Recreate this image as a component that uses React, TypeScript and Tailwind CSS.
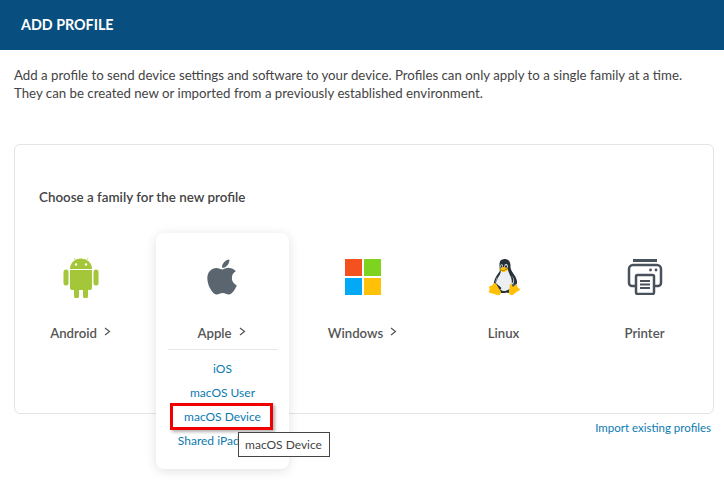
import { FaApple } from 'react-icons/fa';
import { FcLinux } from 'react-icons/fc';

function Chevron() {
  return (
    <svg width="7" height="9" viewBox="0 0 7 9" className="ml-[7px] mb-[4px]" fill="none">
      <path d="M1 1l4.5 3.5L1 8" stroke="#555" strokeWidth="1.2" />
    </svg>
  );
}

function AndroidIcon() {
  return (
    <svg width="36" height="42" viewBox="0 0 36 42" fill="#a4c639">
      <path d="M7 13a11 10.5 0 0 1 22 0z" />
      <path d="M11 2l2.500 4M25 2l-2.500 4" stroke="#a4c639" strokeWidth="0.6" />
      <circle cx="13" cy="8.500" r="1.200" fill="#fff" />
      <circle cx="23" cy="8.500" r="1.200" fill="#fff" />
      <path d="M7 14h22v18a2 2 0 0 1-2 2h-2v6a2 2 0 0 1-5 0v-6h-4v6a2 2 0 0 1-5 0v-6H9a2 2 0 0 1-2-2z" />
      <rect x="0.500" y="13.500" width="5" height="16" rx="2.500" />
      <rect x="30.500" y="13.500" width="5" height="16" rx="2.500" />
    </svg>
  );
}

function WindowsIcon() {
  return (
    <svg width="36" height="36" viewBox="0 0 36 36">
      <rect width="17" height="17" fill="#f4511e" />
      <rect x="19" width="17" height="17" fill="#7ed321" />
      <rect y="19" width="17" height="17" fill="#03a9f4" />
      <rect x="19" y="19" width="17" height="17" fill="#ffc107" />
    </svg>
  );
}

function PrinterIcon() {
  return (
    <svg width="36" height="36" viewBox="0 0 36 36" fill="none" stroke="#47525c">
      <path d="M6 1.500h24" strokeWidth="3" />
      <path d="M8 27H5a3 3 0 0 1-3-3V10a4 4 0 0 1 4-4h24a4 4 0 0 1 4 4v14a3 3 0 0 1-3 3h-3" strokeWidth="2.500" />
      <rect x="9" y="16" width="18" height="19" rx="1.500" strokeWidth="2.500" fill="#fff" />
      <path d="M13 22h10M13 25.500h10M13 29h10" strokeWidth="1.800" />
      <circle cx="23.500" cy="11" r="1.400" fill="#47525c" stroke="none" />
      <circle cx="29" cy="11" r="1.400" fill="#47525c" stroke="none" />
    </svg>
  );
}

const families = [
  { name: 'Android', icon: <AndroidIcon />, more: true },
  { name: 'Apple', icon: <FaApple size={40} color="#5a6570" />, more: true, open: true },
  { name: 'Windows', icon: <WindowsIcon />, more: true },
  { name: 'Linux', icon: <FcLinux size={48} /> },
  { name: 'Printer', icon: <PrinterIcon /> },
];

const appleItems = ['iOS', 'macOS User', 'macOS Device', 'Shared iPad User'];

export default function App() {
  return (
    <div className="h-[504px] w-[724px] overflow-hidden bg-white font-['Lato',sans-serif] text-[13.250px] text-[#444]">
      <div className="flex h-[50px] items-center bg-[#084e7e] pl-[21px] text-[14.300px] font-bold text-white">ADD PROFILE</div>

      <p className="ml-[14px] mr-[10px] mt-[16px] text-[13.250px] leading-[18px]">
        Add a profile to send device settings and software to your device. Profiles can only apply to a single family at a time.
        <br />
        They can be created new or imported from a previously established environment.
      </p>

      <div className="ml-[14px] mr-[10px] mt-[42px] h-[270px] rounded-[6px] border border-[#e2e5e8] pt-[43px]">
        <div className="pl-[24px] text-[13.400px] font-semibold leading-[18px]">Choose a family for the new profile</div>
        <div className="mt-[27px] flex gap-2">
          {families.map((f) => (
            <div
              key={f.name}
              className={`flex w-[133px] flex-col items-center pt-[19px] ${f.open ? 'h-[236px] rounded-[8px] bg-white shadow-[0_2px_12px_rgba(0,0,0,0.12)]' : ''}`}
            >
              <div className="flex h-[50px] items-center justify-center pr-[2px]">{f.icon}</div>
              <div className="mt-[22px] flex h-[18px] items-center pr-[2px] text-[13.200px] font-semibold leading-[18px] text-[#555]">
                {f.name}
                {f.more && <Chevron />}
              </div>
              {f.open && (
                <div className="mt-[7px] w-[110px] border-t border-[#e4e6e8] pt-[7px] text-center text-[12px] leading-[24px] text-[#0b7ab0]">
                  {appleItems.map((item) => (
                    <div key={item} className="relative whitespace-nowrap">
                      {item}
                      {item === 'macOS Device' && (
                        <>
                          <span className="absolute left-[2px] top-[-2px] h-[27px] w-[103px] border-[3px] border-[#f00000] shadow-[2px_2px_3px_rgba(0,0,0,0.3)]" />
                          <span className="absolute left-[70px] top-[27px] z-10 h-[25px] w-[92px] border border-[#444] bg-white text-[12px] leading-[23px] text-[#444]">
                            macOS Device
                          </span>
                        </>
                      )}
                    </div>
                  ))}
                </div>
              )}
            </div>
          ))}
        </div>
      </div>

      <div className="mr-[13px] mt-[5px] text-right text-[11.500px] leading-[18px] text-[#0b7ab0]">Import existing profiles</div>
    </div>
  );
}
